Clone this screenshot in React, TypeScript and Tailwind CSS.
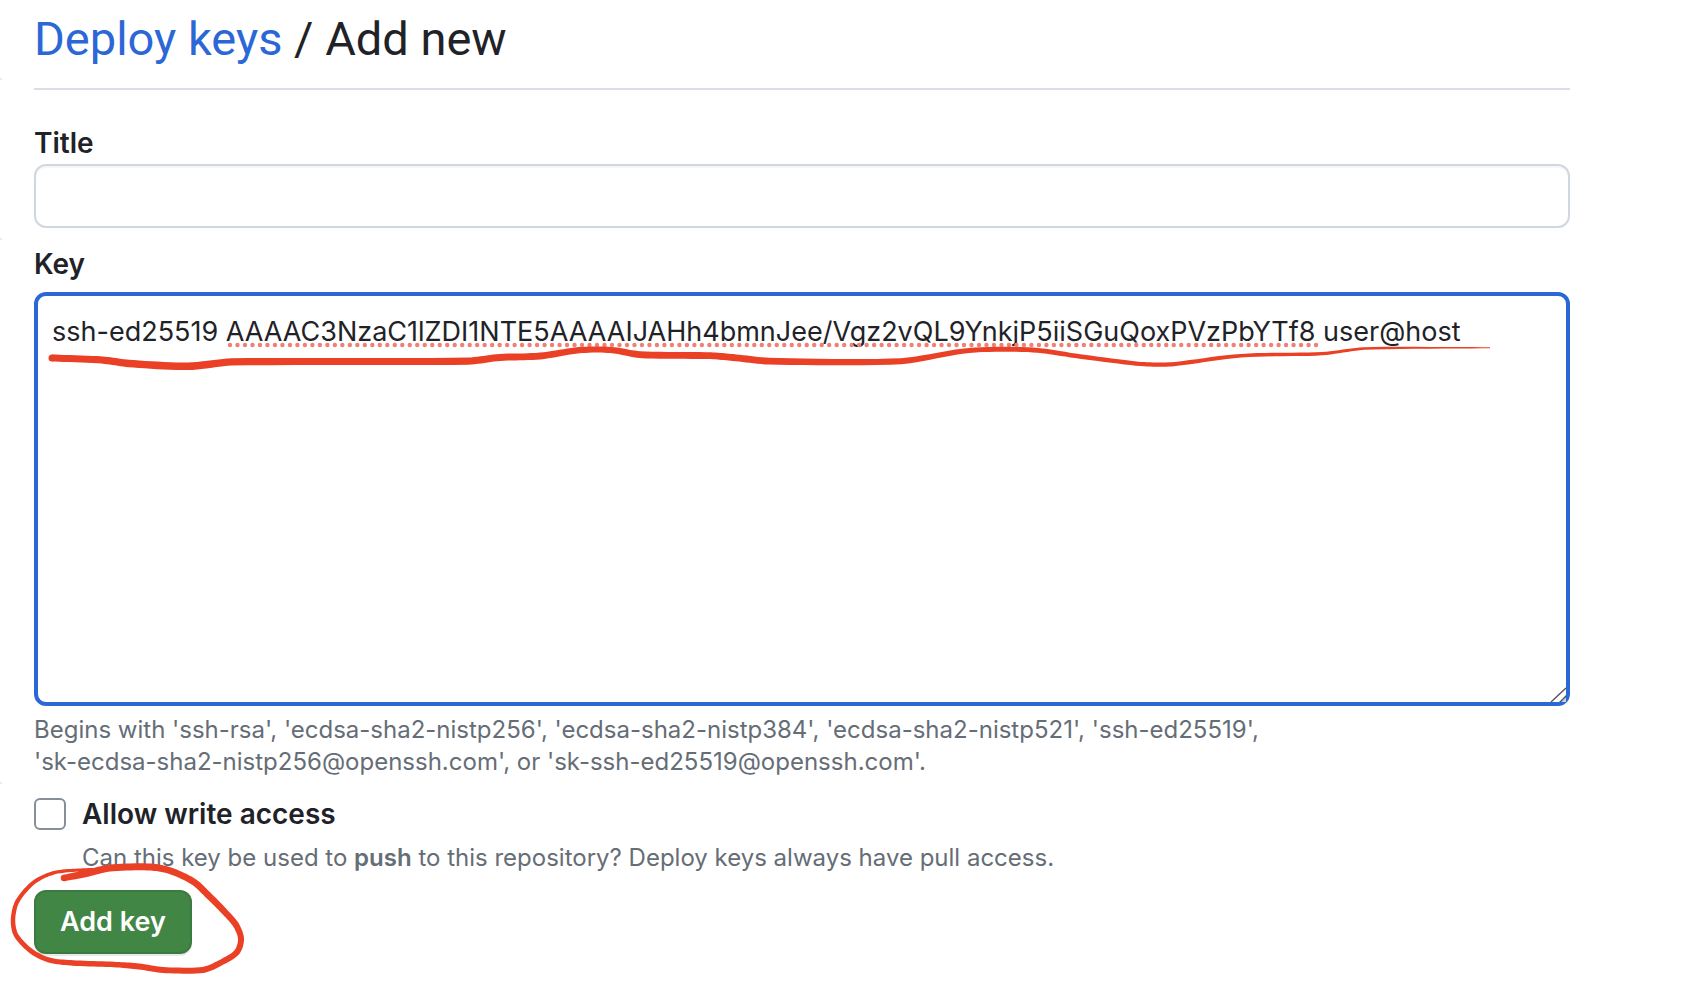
import { useState } from "react";

type InkPoint = [x: number, y: number, width: number];

const spline = (a: number, b: number, c: number, d: number, t: number) =>
  0.5 *
  (2 * b + (c - a) * t + (2 * a - 5 * b + 4 * c - d) * t * t + (3 * b - a - 3 * c + d) * t * t * t);

/* Turns a pen trace with a width at each point into a closed outline. */
function inkOutline(points: InkPoint[]): string {
  const trace: InkPoint[] = [];
  for (let i = 0; i < points.length - 1; i++) {
    const p0 = points[Math.max(0, i - 1)];
    const p1 = points[i];
    const p2 = points[i + 1];
    const p3 = points[Math.min(points.length - 1, i + 2)];
    const gap = Math.hypot(p2[0] - p1[0], p2[1] - p1[1]);
    const before = Math.min(1, gap / (Math.hypot(p1[0] - p0[0], p1[1] - p0[1]) || gap));
    const after = Math.min(1, gap / (Math.hypot(p3[0] - p2[0], p3[1] - p2[1]) || gap));
    const a = p1.map((v, k) => v - (v - p0[k]) * before);
    const d = p2.map((v, k) => v + (p3[k] - v) * after);
    for (let s = 0; s < 10; s++) {
      const t = s / 10;
      trace.push([0, 1, 2].map((k) => spline(a[k], p1[k], p2[k], d[k], t)) as InkPoint);
    }
  }
  trace.push(points[points.length - 1]);
  const left: string[] = [];
  const right: string[] = [];
  trace.forEach(([x, y, w], i) => {
    const prev = trace[Math.max(0, i - 1)];
    const next = trace[Math.min(trace.length - 1, i + 1)];
    const dx = next[0] - prev[0];
    const dy = next[1] - prev[1];
    const len = Math.hypot(dx, dy) || 1;
    const nx = (-dy / len) * (w / 2);
    const ny = (dx / len) * (w / 2);
    left.push(`${(x + nx).toFixed(1)} ${(y + ny).toFixed(1)}`);
    right.unshift(`${(x - nx).toFixed(1)} ${(y - ny).toFixed(1)}`);
  });
  return `M${left.join("L")}L${right.join("L")}Z`;
}

const underline: InkPoint[] = [
  [52, 358, 7], [102, 360, 7.2], [129, 363.5, 7.4], [188, 366.3, 7.6], [232, 361.9, 7.2],
  [468, 361.2, 7.2], [500, 357.5, 7], [540, 356, 6.8], [579, 350.2, 6.2], [611, 350, 6.2],
  [640, 354.7, 6.8], [711, 355.7, 6.8], [733, 357.5, 6.8], [769, 361.2, 6.8], [901, 361.2, 6],
  [969, 350.5, 5], [1033, 350, 4.8], [1080, 356.5, 4.5], [1141, 364, 4.3], [1172, 364.3, 4.2],
  [1241, 355.7, 3.7], [1322, 353.7, 3.3], [1364, 348.5, 2.7], [1490, 347.7, 1],
];

const circle: InkPoint[] = [
  [64, 878, 6.5], [86, 873.5, 7], [110, 868, 7], [151, 867, 7], [171, 871, 6.7],
  [194, 882, 6.7], [208, 895, 6.7], [222, 909, 6.5], [236, 925, 6.3], [241, 939, 6],
  [237, 952, 6], [222, 962, 6], [203, 970, 6], [163, 970, 6], [139, 966.5, 6],
  [114, 964.5, 5.5], [73, 963, 5.5], [49, 960, 5], [31, 951, 5], [16, 935, 4.7],
  [13, 920, 4.5], [17, 902, 4.2], [33, 883, 4], [53, 873, 3.5], [78, 870, 3], [102, 869, 2],
];

function Ink({ points, viewBox, className }: { points: InkPoint[]; viewBox: string; className: string }) {
  const [x, y, w] = points[0];
  return (
    <svg viewBox={viewBox} className={className} fill="#ea4025" aria-hidden="true">
      <circle cx={x} cy={y} r={w / 2} />
      <path d={inkOutline(points)} />
    </svg>
  );
}

export default function App() {
  const [title, setTitle] = useState("");
  const [key, setKey] = useState(
    "ssh-ed25519 AAAAC3NzaC1lZDI1NTE5AAAAIJAHh4bmnJee/Vgz2vQL9YnkjP5iiSGuQoxPVzPbYTf8 user@host",
  );
  const [write, setWrite] = useState(false);

  return (
    <div className="flex min-h-screen bg-white font-['Inter',sans-serif] text-[#1f2328]">
      <div className="flex w-0.5 shrink-0 flex-col pt-[78px]" aria-hidden="true">
        <div className="h-0.5 bg-[#e9ebed]" />
        <div className="mt-[158px] h-0.5 bg-[#e9ebed]" />
        <div className="mt-[542px] h-0.5 bg-[#e9ebed]" />
      </div>
      <main className="min-w-0 flex-1 pr-28 pl-8">
        <h1 className="h-[90px] border-b-2 border-[#d8dee4] pt-[5px] font-['Roboto',sans-serif] text-[47px] leading-[68px]">
          <a href="#keys" className="text-[#2c67d6]">Deploy keys</a> / Add new
        </h1>

        <form onSubmit={(e) => e.preventDefault()}>
          <label htmlFor="title" className="mt-8 block text-[28px] leading-[42px] font-semibold">
            Title
          </label>
          <input
            id="title"
            type="text"
            value={title}
            onChange={(e) => setTitle(e.target.value)}
            className="block h-16 w-full rounded-xl border-2 border-[#d0d7de] px-4 text-[27px] shadow-[inset_0_2px_0_rgba(208,215,222,0.2)] outline-none"
          />

          <label htmlFor="key" className="mt-[15px] block text-[28px] leading-[42px] font-semibold">
            Key
          </label>
          <div className="relative mt-[7px]">
            <textarea
              id="key"
              spellCheck={false}
              value={key}
              onChange={(e) => setKey(e.target.value)}
              className="block h-[414px] w-full resize-none overflow-hidden rounded-xl border-4 border-[#2c67d6] px-3.5 py-[15px] text-[27px] leading-[42px] outline-none"
            />
            <svg
              viewBox="0 0 1100 6"
              className="pointer-events-none absolute top-[50px] left-[193px] h-1.5 w-[1100px]"
              aria-hidden="true"
            >
              <line x1="3" y1="3" x2="1092" y2="3" stroke="#f07f76" strokeWidth="4.4" strokeLinecap="round" strokeDasharray="0 7.49" />
            </svg>
            <Ink
              points={underline}
              viewBox="34 292 1480 90"
              className="pointer-events-none absolute top-0 left-0 h-[90px] w-[1480px]"
            />
            <svg viewBox="0 0 20 20" className="pointer-events-none absolute right-0.5 bottom-0.5 size-5" fill="none" aria-hidden="true">
              <path d="M3 18L18 4M12 18L18 12" stroke="#555" strokeWidth="1.4" />
              <path d="M13.5 18L18 13.5V18Z" fill="#c3d3ee" />
            </svg>
          </div>
          <p className="mt-2 text-[24px] leading-8 text-[#656d76]">
            Begins with 'ssh-rsa', 'ecdsa-sha2-nistp256', 'ecdsa-sha2-nistp384', 'ecdsa-sha2-nistp521', 'ssh-ed25519',
            <br />
            'sk-ecdsa-sha2-nistp256@openssh.com', or 'sk-ssh-ed25519@openssh.com'.
          </p>

          <div className="mt-[15px] flex items-center gap-4">
            <input
              id="write"
              type="checkbox"
              checked={write}
              onChange={(e) => setWrite(e.target.checked)}
              aria-describedby="write-note"
              className="size-8 shrink-0 appearance-none rounded-md border-2 border-[#868f99] checked:bg-[#2c67d6]"
            />
            <label htmlFor="write" className="text-[28px] leading-[42px] font-semibold">
              Allow write access
            </label>
          </div>
          <p id="write-note" className="mt-[7px] pl-12 text-[24px] leading-8 text-[#656d76]">
            Can this key be used to <b className="font-semibold">push</b> to this repository? Deploy keys always have pull access.
          </p>

          <div className="relative mt-4 w-fit">
            <button
              type="submit"
              className="block h-16 rounded-xl border-2 border-[#3b7a40] bg-[#428646] px-6 text-[27px] leading-[42px] font-semibold text-white shadow-[0_2px_0_rgba(31,35,40,0.1)]"
            >
              Add key
            </button>
            <Ink
              points={circle}
              viewBox="4 855 250 125"
              className="pointer-events-none absolute -top-[35px] -left-[30px] h-[125px] w-[250px] max-w-none"
            />
          </div>
        </form>
      </main>
    </div>
  );
}
